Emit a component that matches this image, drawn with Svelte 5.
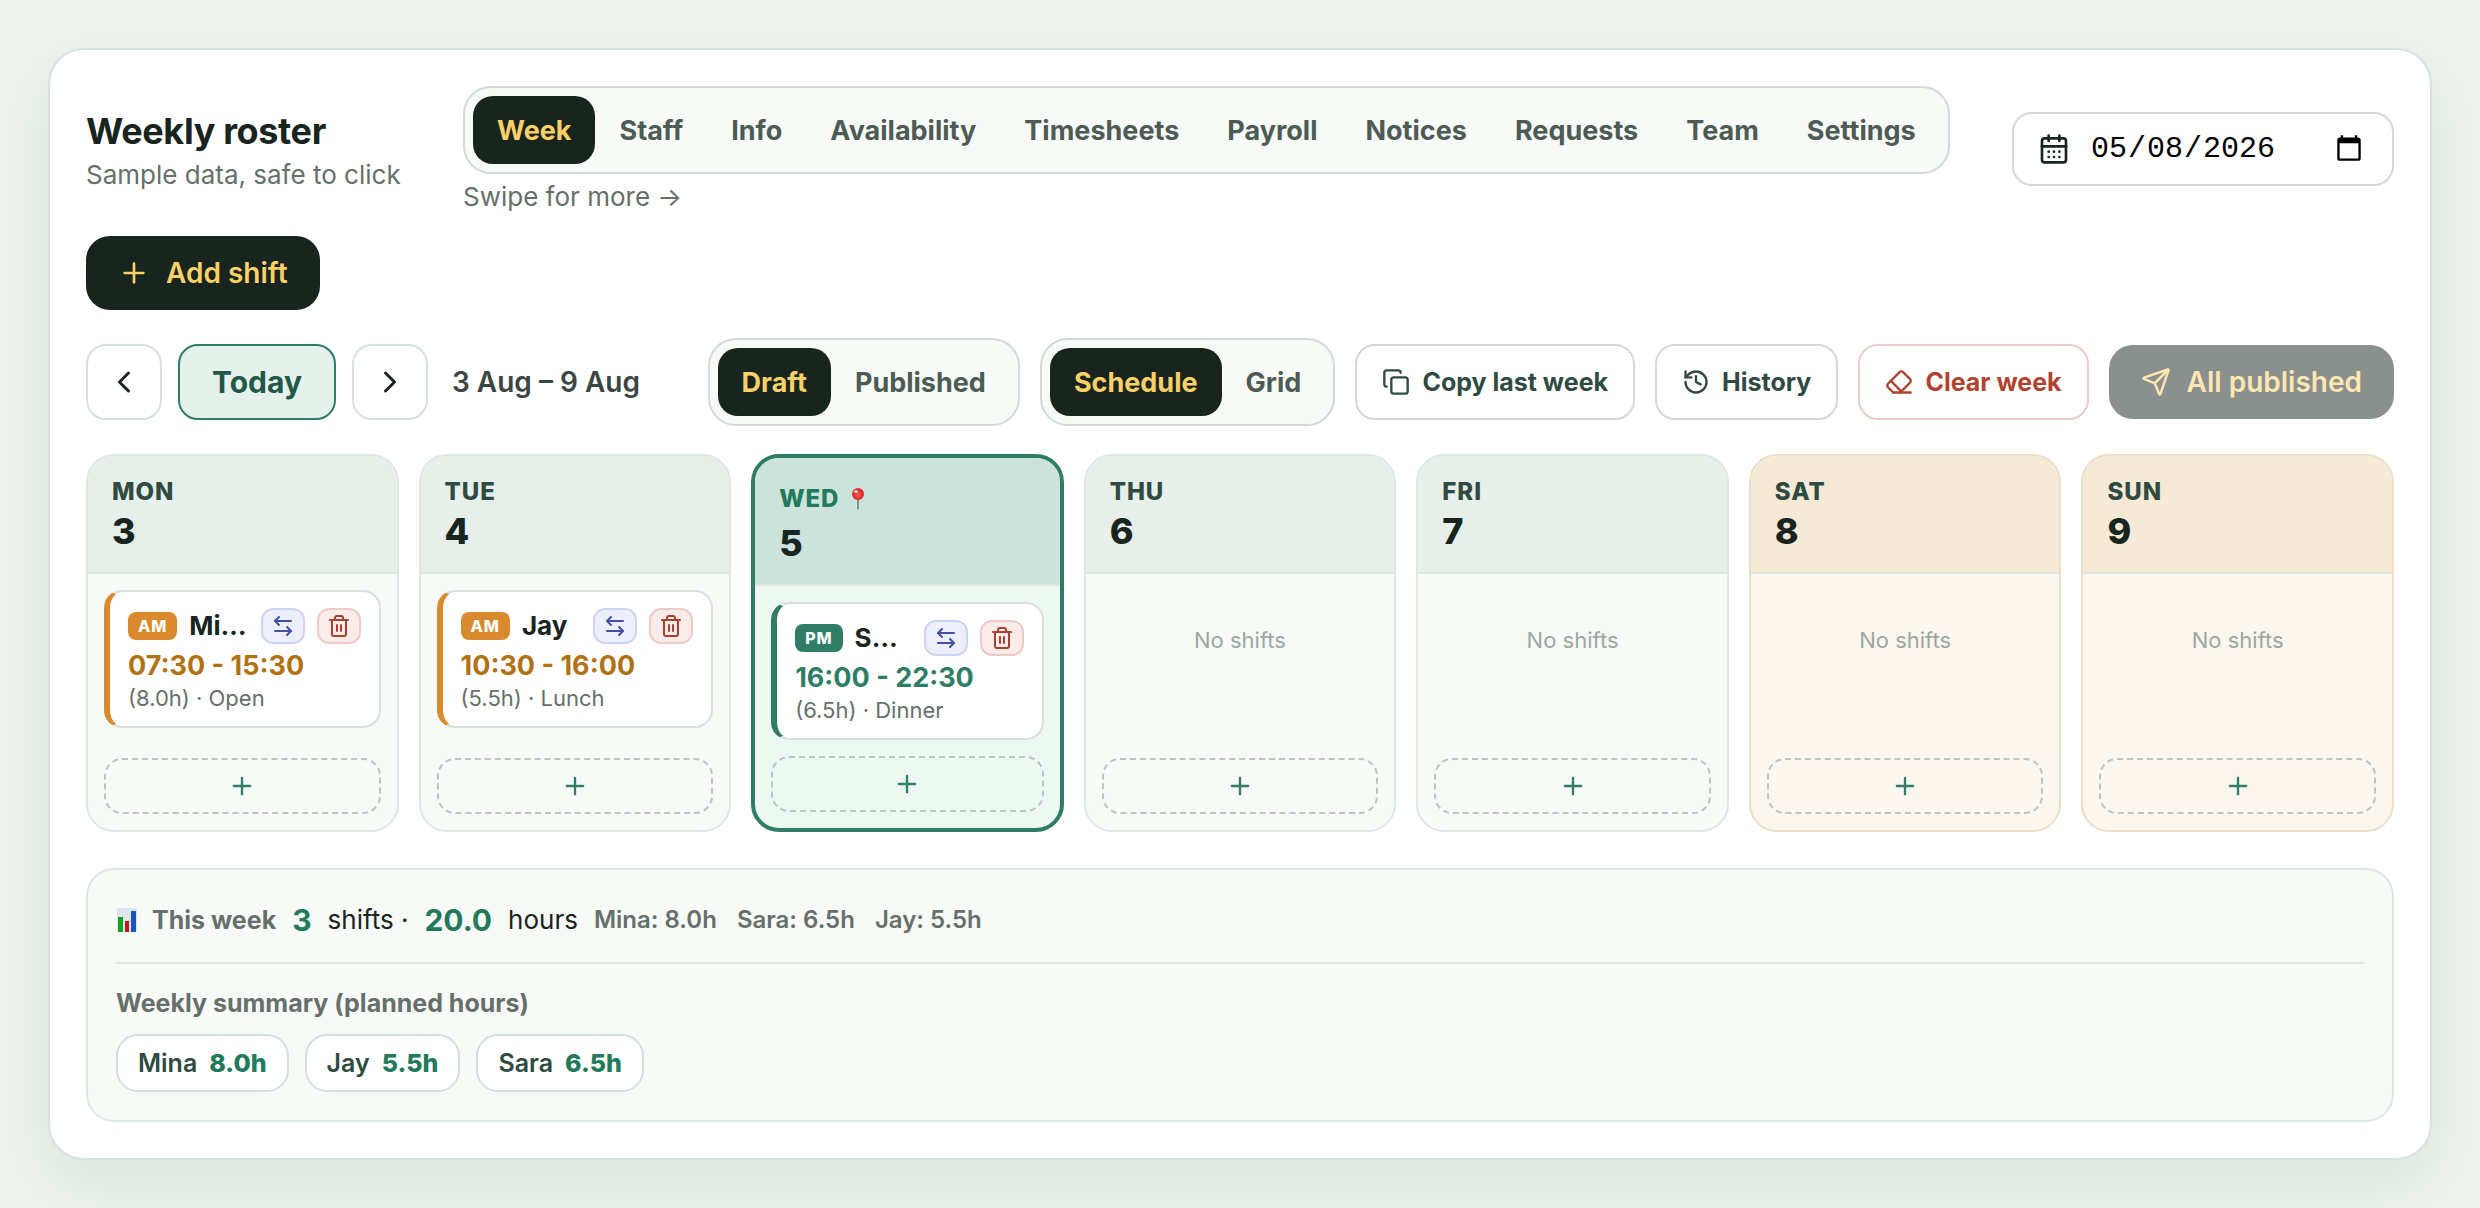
<script>
  const tabs = ['Week', 'Staff', 'Info', 'Availability', 'Timesheets', 'Payroll', 'Notices', 'Requests', 'Team', 'Settings'];
  let tab = $state('Week');
  let status = $state('Draft');
  let view = $state('Schedule');
  let date = $state('2026-05-08');

  const days = [
    { name: 'Mon', num: 3, shifts: [{ period: 'AM', who: 'Mina', time: '07:30 - 15:30', note: '(8.0h) · Open' }] },
    { name: 'Tue', num: 4, shifts: [{ period: 'AM', who: 'Jay', time: '10:30 - 16:00', note: '(5.5h) · Lunch' }] },
    { name: 'Wed', num: 5, today: true, shifts: [{ period: 'PM', who: 'Sara', time: '16:00 - 22:30', note: '(6.5h) · Dinner' }] },
    { name: 'Thu', num: 6, shifts: [] },
    { name: 'Fri', num: 7, shifts: [] },
    { name: 'Sat', num: 8, weekend: true, shifts: [] },
    { name: 'Sun', num: 9, weekend: true, shifts: [] }
  ];

  const worked = [['Mina', '8.0h'], ['Sara', '6.5h'], ['Jay', '5.5h']];
  const planned = [['Mina', '8.0h'], ['Jay', '5.5h'], ['Sara', '6.5h']];

  const icons = {
    plus: ['M5 12h14', 'M12 5v14'],
    left: ['m15 18-6-6 6-6'],
    right: ['m9 18 6-6-6-6'],
    calendar: ['M8 2v4', 'M16 2v4', 'M5 4h14a2 2 0 0 1 2 2v14a2 2 0 0 1-2 2H5a2 2 0 0 1-2-2V6a2 2 0 0 1 2-2z', 'M3 10h18', 'M8 14h.01', 'M12 14h.01', 'M16 14h.01', 'M8 18h.01', 'M12 18h.01', 'M16 18h.01'],
    copy: ['M10 8h10a2 2 0 0 1 2 2v10a2 2 0 0 1-2 2H10a2 2 0 0 1-2-2V10a2 2 0 0 1 2-2z', 'M4 16c-1.1 0-2-.9-2-2V4c0-1.1.9-2 2-2h10c1.1 0 2 .9 2 2'],
    history: ['M3 12a9 9 0 1 0 9-9 9.75 9.75 0 0 0-6.74 2.74L3 8', 'M3 3v5h5', 'M12 7v5l4 2'],
    eraser: ['m7 21-4.3-4.3c-1-1-1-2.5 0-3.4l9.6-9.6c1-1 2.5-1 3.4 0l5.6 5.6c1 1 1 2.5 0 3.4L13 21', 'M22 21H7', 'm5 11 9 9'],
    send: ['M14.536 21.686a.5.5 0 0 0 .937-.024l6.5-19a.496.496 0 0 0-.635-.635l-19 6.5a.5.5 0 0 0-.024.937l7.93 3.18a2 2 0 0 1 1.112 1.11z', 'm21.854 2.147-10.94 10.939'],
    swap: ['M8 3 4 7l4 4', 'M4 7h16', 'm16 21 4-4-4-4', 'M20 17H4'],
    trash: ['M3 6h18', 'M19 6v14c0 1-1 2-2 2H7c-1 0-2-1-2-2V6', 'M8 6V4c0-1 1-2 2-2h4c1 0 2 1 2 2v2', 'M10 11v6', 'M14 11v6']
  };
</script>

{#snippet icon(name, size)}
  <svg class="icon" width={size} height={size} viewBox="0 0 24 24" aria-hidden="true">
    {#each icons[name] as d}<path {d} />{/each}
  </svg>
{/snippet}

<main class="roster">
  <header class="top">
    <div class="heading">
      <h1>Weekly roster</h1>
      <p>Sample data, safe to click</p>
    </div>
    <div class="nav-wrap">
      <nav class="segment">
        {#each tabs as t}
          <button class="seg" class:active={tab === t} onclick={() => (tab = t)}>{t}</button>
        {/each}
      </nav>
      <p class="hint">Swipe for more →</p>
    </div>
    <label class="date">
      {@render icon('calendar', 32)}
      <input type="date" aria-label="Roster date" bind:value={date} />
    </label>
    <button class="primary">{@render icon('plus', 32)} Add shift</button>
  </header>

  <div class="toolbar">
    <div class="week-nav">
      <button class="arrow" aria-label="Previous week">{@render icon('left', 36)}</button>
      <button class="today-btn">Today</button>
      <button class="arrow" aria-label="Next week">{@render icon('right', 36)}</button>
      <span class="range">3 Aug – 9 Aug</span>
    </div>
    <div class="actions">
      <div class="segment">
        {#each ['Draft', 'Published'] as s}
          <button class="seg" class:active={status === s} onclick={() => (status = s)}>{s}</button>
        {/each}
      </div>
      <div class="segment">
        {#each ['Schedule', 'Grid'] as v}
          <button class="seg" class:active={view === v} onclick={() => (view = v)}>{v}</button>
        {/each}
      </div>
      <button class="ghost">{@render icon('copy', 28)} Copy last week</button>
      <button class="ghost">{@render icon('history', 28)} History</button>
      <button class="ghost danger">{@render icon('eraser', 28)} Clear week</button>
      <button class="primary" disabled>{@render icon('send', 30)} All published</button>
    </div>
  </div>

  <section class="week">
    {#each days as day (day.num)}
      <article class="day" class:today={day.today} class:weekend={day.weekend}>
        <div class="day-head">
          <div class="day-name">
            {day.name}
            {#if day.today}
              <svg class="pin" width="14" height="22" viewBox="0 0 14 22" aria-hidden="true">
                <path d="M6 11h2v10q-1 1.500-2 0z" fill="#8b8f92" />
                <circle cx="7" cy="6" r="6" fill="#dc2f31" />
                <circle cx="7" cy="7" r="3" fill="#ee4c47" />
                <ellipse cx="5" cy="3.500" rx="2" ry="1.500" fill="#fbc4bd" />
              </svg>
            {/if}
          </div>
          <div class="day-num">{day.num}</div>
        </div>
        <div class="day-body">
          {#each day.shifts as s}
            <div class="shift" class:pm={s.period === 'PM'}>
              <div class="shift-top">
                <span class="badge">{s.period}</span>
                <strong class="who">{s.who}</strong>
                <button class="mini" aria-label="Swap shift">{@render icon('swap', 24)}</button>
                <button class="mini del" aria-label="Delete shift">{@render icon('trash', 24)}</button>
              </div>
              <div class="time">{s.time}</div>
              <div class="note">{s.note}</div>
            </div>
          {:else}
            <p class="none">No shifts</p>
          {/each}
          <button class="add" aria-label="Add shift on {day.name}">{@render icon('plus', 28)}</button>
        </div>
      </article>
    {/each}
  </section>

  <section class="stats">
    <div class="totals">
      <span class="label">
        <svg width="22" height="24" viewBox="0 0 22 24" aria-hidden="true">
          <path d="M1 0h20v24H1z" fill="#dde6ee" />
          <path d="M2 9h5v15H2z" fill="#12a51c" />
          <path d="M9 13h4v11H9z" fill="#c4141c" />
          <path d="M15 3h5v21h-5z" fill="#1558bd" />
        </svg>
        This week
      </span>
      <b>3</b> <span>shifts ·</span> <b>20.0</b> <span>hours</span>
      <span class="people">
        {#each worked as [name, hours]}<span>{name}: {hours}</span>{/each}
      </span>
    </div>
    <h2>Weekly summary (planned hours)</h2>
    <div class="pills">
      {#each planned as [name, hours]}
        <span class="pill">{name} <b>{hours}</b></span>
      {/each}
    </div>
  </section>
</main>

<style>
  :global(body) {
    background: #eef3ef;
    color: #18241e;
    font-family: Inter, "Liberation Sans", sans-serif;
    font-size: 26px;
  }
  h1, h2, p { margin: 0; }
  button {
    font: inherit;
    color: inherit;
    padding: 0;
    cursor: pointer;
    white-space: nowrap;
  }
  .icon {
    flex: none;
    fill: none;
    stroke: currentColor;
    stroke-width: 2;
    stroke-linecap: round;
    stroke-linejoin: round;
  }

  .roster {
    margin: 48px;
    padding: 36px;
    background: #fff;
    border: 2px solid #d9e1dd;
    border-radius: 36px;
    box-shadow: 0 24px 64px rgba(24, 60, 44, 0.08);
  }

  .top {
    display: flex;
    flex-wrap: wrap;
    align-items: center;
    justify-content: space-between;
    gap: 24px;
  }
  .top p {
    margin-top: 4px;
    color: #66706b;
    line-height: 32px;
  }
  .top .hint {
    margin-top: 8px;
    line-height: 30px;
  }
  h1 {
    font-size: 36px;
    line-height: 48px;
    font-weight: 700;
    letter-spacing: -0.01em;
  }

  .segment {
    display: flex;
    padding: 8px;
    background: #f7faf7;
    border: 2px solid #d3d9d6;
    border-radius: 28px;
  }
  .seg {
    height: 68px;
    padding: 0 24px;
    border: 0;
    border-radius: 20px;
    background: none;
    color: #4d5b55;
    font-size: 27px;
    font-weight: 700;
  }
  .seg.active {
    background: #18241e;
    color: #fdd068;
  }

  .date {
    display: flex;
    align-items: center;
    gap: 20px;
    box-sizing: border-box;
    height: 74px;
    padding: 0 28px 0 24px;
    border: 2px solid #d3d9d6;
    border-radius: 20px;
  }
  .date input {
    width: 274px;
    padding: 0;
    border: 0;
    outline: 0;
    background: none;
    color: #000;
    font-family: "Liberation Mono", monospace;
    font-size: 30px;
  }
  .date input::-webkit-calendar-picker-indicator {
    width: 30px;
    height: 30px;
    padding: 0;
    background-size: 30px;
  }

  .primary {
    display: flex;
    align-items: center;
    gap: 16px;
    height: 74px;
    padding: 0 32px;
    border: 0;
    border-radius: 24px;
    background: #18241e;
    color: #fdd068;
    font-size: 28px;
    font-weight: 600;
  }
  .primary:disabled { opacity: 0.5; }

  .toolbar {
    display: flex;
    flex-wrap: wrap;
    align-items: center;
    justify-content: space-between;
    gap: 20px;
    margin: 28px 0;
  }
  .week-nav, .actions {
    display: flex;
    align-items: center;
    gap: 16px;
  }
  .actions { gap: 20px; }
  .arrow, .today-btn, .ghost {
    display: flex;
    align-items: center;
    justify-content: center;
    box-sizing: border-box;
    height: 76px;
    border: 2px solid #d9e1dd;
    border-radius: 20px;
    background: #fff;
  }
  .arrow { width: 76px; }
  .today-btn {
    padding: 0 32px;
    border-color: #2f7d66;
    background: #e7f1ec;
    color: #20594a;
    font-size: 30px;
    font-weight: 700;
  }
  .range {
    margin-left: 8px;
    color: #3a4641;
    font-size: 28px;
    font-weight: 600;
  }
  .ghost {
    gap: 12px;
    padding: 0 25px;
    border-color: #d3d9d6;
    color: #2f4a41;
    font-size: 25px;
    font-weight: 700;
  }
  .danger {
    border-color: #ecccc8;
    color: #b04330;
  }

  .week {
    display: grid;
    grid-template-columns: repeat(7, minmax(0, 1fr));
    gap: 20px;
  }
  .day {
    display: flex;
    flex-direction: column;
    overflow: hidden;
    border: 2px solid #dfe7e3;
    border-radius: 28px;
    background: #f7faf7;
  }
  .day-head {
    padding: 20px 24px 18px;
    background: #e6efea;
    border-bottom: 2px solid #dfe7e3;
  }
  .day-name {
    display: flex;
    align-items: center;
    gap: 12px;
    color: #2f4a41;
    font-size: 24px;
    font-weight: 800;
    line-height: 32px;
    letter-spacing: 0.04em;
    text-transform: uppercase;
  }
  .day-num {
    font-size: 36px;
    font-weight: 800;
    line-height: 46px;
  }
  .day-body {
    display: flex;
    flex: 1;
    flex-direction: column;
    gap: 16px;
    padding: 16px;
  }
  .today {
    border: 4px solid #2f7d66;
    background: #edf8f3;
  }
  .today .day-head { background: #cbe3da; }
  .today .day-name {
    color: #217a5b;
    line-height: 42px;
  }
  .weekend {
    border-color: #eadfc8;
    background: #fbf6ee;
  }
  .weekend .day-head { background: #f6e9d6; }

  .shift {
    padding: 16px 18px;
    background: #fff;
    border: 2px solid #d9e1dd;
    border-left: 6px solid #d98a2e;
    border-radius: 18px;
  }
  .shift-top {
    display: flex;
    align-items: center;
    gap: 12px;
  }
  .badge {
    padding: 0 10px;
    border-radius: 8px;
    background: #d98a2e;
    color: #fff;
    font-size: 16px;
    font-weight: 800;
    line-height: 28px;
    letter-spacing: 0.06em;
  }
  .who {
    flex: 1;
    min-width: 0;
    overflow: hidden;
    text-overflow: ellipsis;
    white-space: nowrap;
    font-weight: 700;
    line-height: 36px;
  }
  .mini {
    display: flex;
    flex: none;
    align-items: center;
    justify-content: center;
    box-sizing: border-box;
    width: 44px;
    height: 36px;
    border: 2px solid #cdd5f0;
    border-radius: 12px;
    background: #edf0fc;
    color: #4350a8;
  }
  .mini.del {
    border-color: #ecccc8;
    background: #fbece9;
    color: #a94131;
  }
  .time {
    margin-top: 6px;
    color: #b07214;
    font-size: 27px;
    font-weight: 700;
    line-height: 32px;
  }
  .note {
    margin-top: 4px;
    color: #66706b;
    font-size: 22px;
    line-height: 24px;
  }
  .pm { border-left-color: #2f7d66; }
  .pm .badge { background: #2f7d66; }
  .pm .time { color: #2f7d66; }
  .none {
    padding: 36px 0;
    color: #9ca8a2;
    font-size: 22px;
    line-height: 28px;
    text-align: center;
  }
  .add {
    display: flex;
    align-items: center;
    justify-content: center;
    box-sizing: border-box;
    height: 56px;
    margin-top: auto;
    border: 2px dashed #bcc6c1;
    border-radius: 18px;
    background: none;
    color: #2f7d66;
  }

  .stats {
    margin-top: 36px;
    padding: 28px;
    background: #f7faf7;
    border: 2px solid #dfe7e3;
    border-radius: 28px;
  }
  .totals {
    display: flex;
    flex-wrap: wrap;
    align-items: center;
    column-gap: 16px;
    padding-bottom: 20px;
    border-bottom: 2px solid #dfe7e3;
    line-height: 44px;
  }
  .totals b {
    color: #217a5b;
    font-size: 30px;
    font-weight: 700;
  }
  .label {
    display: flex;
    align-items: center;
    gap: 14px;
    color: #66706b;
    font-size: 25px;
    font-weight: 700;
  }
  .people {
    display: flex;
    gap: 20px;
    color: #66706b;
    font-size: 24px;
    font-weight: 600;
  }
  h2 {
    margin: 20px 0 12px;
    color: #66706b;
    font-size: 25px;
    font-weight: 700;
    line-height: 38px;
  }
  .pills {
    display: flex;
    flex-wrap: wrap;
    gap: 16px;
  }
  .pill {
    display: flex;
    gap: 12px;
    padding: 0 20px;
    border: 2px solid #d2e2db;
    border-radius: 22px;
    background: #fff;
    color: #2f4a41;
    font-size: 25px;
    font-weight: 600;
    line-height: 54px;
  }
  .pill b {
    color: #217a5b;
    font-weight: 800;
  }
</style>
